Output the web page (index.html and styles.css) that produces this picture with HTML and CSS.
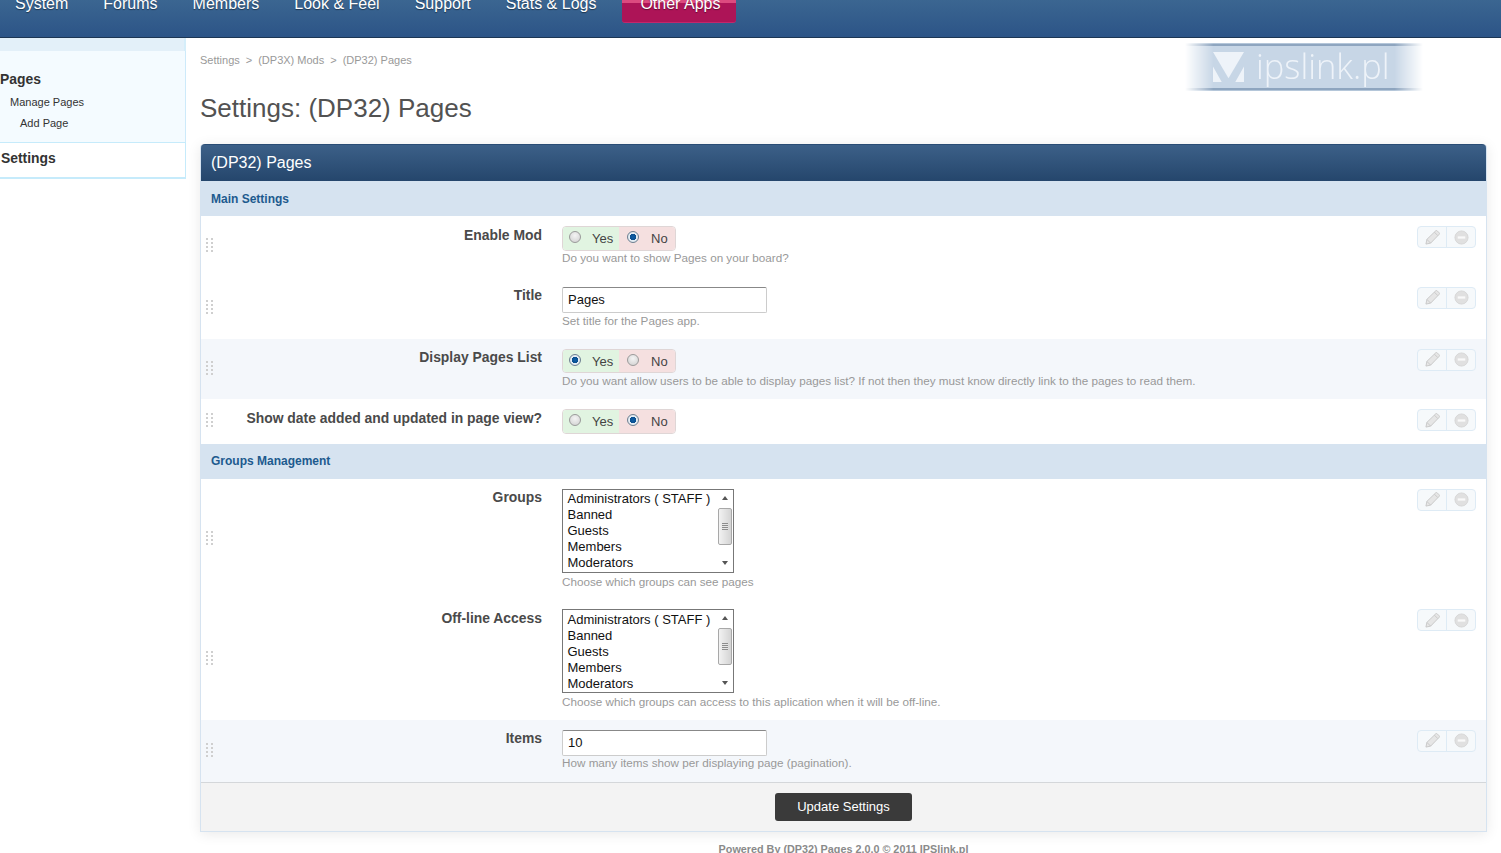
FILE: index.html
```html
<!DOCTYPE html>
<html lang="en">
<head>
<meta charset="utf-8">
<title>Settings: (DP32) Pages</title>
<link rel="stylesheet" href="styles.css">
</head>
<body>
<svg class="defs" width="0" height="0" aria-hidden="true">
  <symbol id="grip" viewBox="0 0 7 14">
    <g fill="#cfcfcf">
      <rect x="0" y="0" width="2" height="2"/><rect x="5" y="0" width="2" height="2"/>
      <rect x="0" y="4" width="2" height="2"/><rect x="5" y="4" width="2" height="2"/>
      <rect x="0" y="8" width="2" height="2"/><rect x="5" y="8" width="2" height="2"/>
      <rect x="0" y="12" width="2" height="2"/><rect x="5" y="12" width="2" height="2"/>
    </g>
  </symbol>
  <symbol id="pencil" viewBox="0 0 16 16">
    <path d="M1 15l1-5L11.500 .8a1 1 0 0 1 1.400 0l2.300 2.300a1 1 0 0 1 0 1.400L6 14z" fill="#e6e6e6" stroke="#c8c8c8"/>
    <path d="M2 10l4 4M10 2.300l3.700 3.700" fill="none" stroke="#c8c8c8"/>
  </symbol>
  <symbol id="minus" viewBox="0 0 16 16">
    <circle cx="8" cy="8" r="7" fill="#e0e0e0" stroke="#d6d6d6"/>
    <rect x="4" y="6.800" width="8" height="2.400" fill="#f9f9f9"/>
  </symbol>
</svg>

<header class="topbar">
  <nav class="nav">
    <a class="nav-item">System</a>
    <a class="nav-item">Forums</a>
    <a class="nav-item">Members</a>
    <a class="nav-item">Look &amp; Feel</a>
    <a class="nav-item">Support</a>
    <a class="nav-item">Stats &amp; Logs</a>
    <a class="nav-item nav-other">Other Apps</a>
  </nav>
</header>

<div class="layout">
  <aside class="sidebar">
    <div class="side-band"></div>
    <div class="side-open">
      <h3 class="side-title side-title-open">Pages</h3>
      <a class="side-link">Manage Pages</a>
      <a class="side-link side-sub">Add Page</a>
    </div>
    <div class="side-closed"><h3 class="side-title">Settings</h3></div>
  </aside>

  <main class="main">
    <div class="top">
      <div>
        <div class="crumbs"><span>Settings</span><span>&gt;</span><span>(DP3X) Mods</span><span>&gt;</span><span>(DP32) Pages</span></div>
        <h1 class="page-title">Settings: (DP32) Pages</h1>
      </div>
      <div class="logo">
        <svg class="logo-mark" viewBox="0 0 32 31" width="31" height="30" aria-hidden="true">
          <path d="M0 0h32L16 27z" fill="#eef3f9"/>
          <path d="M0 15l9 16H0zM32 15l-9 16h9z" fill="#eef3f9"/>
        </svg>
        <span class="logo-text">ipslink.pl</span>
      </div>
    </div>

    <section class="panel">
      <h2 class="panel-head">(DP32) Pages</h2>
      <h3 class="sub-head">Main Settings</h3>

      <div class="row row-enable">
        <svg class="grip"><use href="#grip"/></svg>
        <div class="label">Enable Mod</div>
        <div class="field">
          <div class="toggle"><span class="opt yes"><i class="radio"></i>Yes</span><span class="opt no"><i class="radio on"></i>No</span></div>
          <p class="desc">Do you want to show Pages on your board?</p>
        </div>
        <div class="actions"><span class="act"><svg class="ic"><use href="#pencil"/></svg></span><span class="act"><svg class="ic"><use href="#minus"/></svg></span></div>
      </div>

      <div class="row">
        <svg class="grip"><use href="#grip"/></svg>
        <div class="label">Title</div>
        <div class="field">
          <div class="input">Pages</div>
          <p class="desc">Set title for the Pages app.</p>
        </div>
        <div class="actions"><span class="act"><svg class="ic"><use href="#pencil"/></svg></span><span class="act"><svg class="ic"><use href="#minus"/></svg></span></div>
      </div>

      <div class="row tint">
        <svg class="grip"><use href="#grip"/></svg>
        <div class="label">Display Pages List</div>
        <div class="field">
          <div class="toggle"><span class="opt yes"><i class="radio on"></i>Yes</span><span class="opt no"><i class="radio"></i>No</span></div>
          <p class="desc">Do you want allow users to be able to display pages list? If not then they must know directly link to the pages to read them.</p>
        </div>
        <div class="actions"><span class="act"><svg class="ic"><use href="#pencil"/></svg></span><span class="act"><svg class="ic"><use href="#minus"/></svg></span></div>
      </div>

      <div class="row">
        <svg class="grip"><use href="#grip"/></svg>
        <div class="label">Show date added and updated in page view?</div>
        <div class="field">
          <div class="toggle"><span class="opt yes"><i class="radio"></i>Yes</span><span class="opt no"><i class="radio on"></i>No</span></div>
        </div>
        <div class="actions"><span class="act"><svg class="ic"><use href="#pencil"/></svg></span><span class="act"><svg class="ic"><use href="#minus"/></svg></span></div>
      </div>

      <h3 class="sub-head sub-head-second">Groups Management</h3>

      <div class="row row-groups">
        <svg class="grip"><use href="#grip"/></svg>
        <div class="label">Groups</div>
        <div class="field">
          <div class="list">
            <div class="list-items"><div>Administrators ( STAFF )</div><div>Banned</div><div>Guests</div><div>Members</div><div>Moderators</div></div>
            <div class="scroll"><span class="arrow up"></span><span class="thumb"></span><span class="arrow down"></span></div>
          </div>
          <p class="desc">Choose which groups can see pages</p>
        </div>
        <div class="actions"><span class="act"><svg class="ic"><use href="#pencil"/></svg></span><span class="act"><svg class="ic"><use href="#minus"/></svg></span></div>
      </div>

      <div class="row row-offline">
        <svg class="grip"><use href="#grip"/></svg>
        <div class="label">Off-line Access</div>
        <div class="field">
          <div class="list">
            <div class="list-items"><div>Administrators ( STAFF )</div><div>Banned</div><div>Guests</div><div>Members</div><div>Moderators</div></div>
            <div class="scroll"><span class="arrow up"></span><span class="thumb"></span><span class="arrow down"></span></div>
          </div>
          <p class="desc">Choose which groups can access to this aplication when it will be off-line.</p>
        </div>
        <div class="actions"><span class="act"><svg class="ic"><use href="#pencil"/></svg></span><span class="act"><svg class="ic"><use href="#minus"/></svg></span></div>
      </div>

      <div class="row row-items tint">
        <svg class="grip"><use href="#grip"/></svg>
        <div class="label">Items</div>
        <div class="field">
          <div class="input">10</div>
          <p class="desc">How many items show per displaying page (pagination).</p>
        </div>
        <div class="actions"><span class="act"><svg class="ic"><use href="#pencil"/></svg></span><span class="act"><svg class="ic"><use href="#minus"/></svg></span></div>
      </div>

      <div class="panel-foot"><span class="btn">Update Settings</span></div>
    </section>

    <footer class="powered">Powered By (DP32) Pages 2.0.0 © 2011 IPSlink.pl</footer>
  </main>
</div>
</body>
</html>
```

FILE: styles.css
```css
* { box-sizing: border-box; }
html, body { margin: 0; padding: 0; height: 853px; overflow: hidden; background: #fff; }
body { font-family: "Liberation Sans", Arial, sans-serif; color: #333; font-size: 12px; }
.defs { display: block; height: 0; }

.topbar { height: 38px; overflow: hidden; background: linear-gradient(#3b6691, #2c5487); border-bottom: 1px solid #1c3654; }
.nav { display: flex; margin-top: -16px; padding-left: 15px; gap: 35px; }
.nav-item { height: 39px; line-height: 40px; font-size: 16px; color: #fff; text-shadow: 0 1px 1px rgba(0,0,0,.45); }
.nav-other { margin-left: -9px; padding: 0 16px 0 18px; border-radius: 0 0 3px 3px; background: linear-gradient(to top, #ad1457 19px, #dc4a7f 19px); border-bottom: 1px solid #c2276c; }

.layout { display: flex; }
.sidebar { width: 186px; flex: none; }
.side-band { height: 13px; background: #e3f0f9; border-right: 2px solid #d5eefa; }
.side-open { height: 91px; padding-top: 20px; background: #f4fbff; border-right: 1px solid #cdeafa; }
.side-title { margin: 0; padding-left: 1px; font-size: 13.900px; line-height: 16px; font-weight: bold; color: #333; }
.side-title-open { padding-left: 0; margin-bottom: 7px; }
.side-link { display: block; padding-left: 10px; margin-top: 5px; font-size: 11px; line-height: 16px; color: #333; }
.side-sub { padding-left: 20px; }
.side-closed { height: 37px; padding-top: 7px; background: #fff; border-top: 1px solid #c6ebfb; border-bottom: 2px solid #c6ebfb; border-right: 1px solid #c6ebfb; }

.main { flex: 1; min-width: 0; padding: 0 14px; }
.top { display: flex; justify-content: space-between; height: 86px; }
.crumbs { display: flex; gap: 6px; padding-top: 15px; font-size: 11px; line-height: 14px; color: #999; }
.page-title { margin: 25px 0 0; font-size: 26px; line-height: 32px; font-weight: normal; color: #525252; }
.logo { display: flex; align-items: center; gap: 12px; width: 238px; height: 48px; margin: 5px 64px 0 0; padding-left: 28px; padding-bottom: 3px;
  background: #c7d6e6;
  box-shadow: inset 0 1px 0 #b4c6d9, inset 0 3px 0 #8ea5bf, inset 0 -1px 0 #b4c6d9, inset 0 -3px 0 #8ea5bf;
  -webkit-mask-image: linear-gradient(90deg, transparent, #000 12%, #000 88%, transparent);
  mask-image: linear-gradient(90deg, transparent, #000 12%, #000 88%, transparent); }
.logo-mark { flex: none; margin-top: 2px; }
.logo-text { font-family: "Open Sans", sans-serif; font-weight: 300; font-size: 34.500px; line-height: 44px; color: #eef3f9; }

.panel { border: 1px solid #d6e3f0; border-top: 0; border-radius: 4px 4px 0 0; box-shadow: 0 2px 14px rgba(0,0,0,.09); margin-top: 20px; }
.panel-head { margin: 0; height: 37px; padding: 0 10px; border-radius: 4px 4px 0 0; font-size: 16px; line-height: 35px; font-weight: normal; color: #fff;
  background: linear-gradient(#3c6088, #25466c); border-top: 1px solid #2a4d75; }
.sub-head { margin: 0; height: 35px; padding: 0 10px; font-size: 12px; line-height: 36px; font-weight: bold; color: #1d5a8e; background: #d6e3f0; }
.sub-head-second { line-height: 35px; }

.row { display: grid; grid-template-columns: 341px 1fr auto; column-gap: 20px; padding: 10px 10px 10px 0; position: relative; align-items: start; }
.row-enable .desc { margin: -.5px 0 .5px; }
.row-groups { padding-bottom: 9.500px; }
.row-groups .list { margin-bottom: 1px; }
.row-offline .list { margin-bottom: .5px; }
.row-offline .list-items { padding-top: 2px; }
.row-items { padding-bottom: 10.500px; }
.row-items .desc { margin-top: -.5px; }
.tint { background: #f4f7fb; }
.grip { position: absolute; left: 5px; top: 50%; width: 7px; height: 14px; margin-top: -8px; }
.label { padding-top: .9px; text-align: right; font-size: 13.900px; line-height: 16px; font-weight: bold; color: #4a4a4a; }
.field { min-width: 0; }
.desc { margin: 0; font-size: 11.700px; line-height: 16px; color: #999; }

.toggle { display: inline-flex; height: 24.500px; border-radius: 4px; overflow: hidden; border: 1px solid #dfd6d6; vertical-align: top; }
.opt { display: flex; align-items: center; padding-top: .5px; font-size: 13px; color: #444; }
.yes { width: 56px; padding-left: 6px; background: #e1f4e1; }
.no { width: 56px; padding-left: 8px; background: #f5e0e0; }
.radio { width: 12px; height: 12px; margin-right: 11px; border-radius: 50%; border: 1px solid #9a9a9a; background: radial-gradient(circle at 50% 35%, #f4f4f4, #cfcfcf); margin-top: -3px; }
.no .radio { margin-right: 12px; }
.radio.on { background: radial-gradient(circle, #0d5ea8 0, #0a4f8f 3px, #e6eef5 3.500px, #d6dee6 100%); border-color: #6d7f90; }

.input { width: 205px; height: 26px; padding: 0 5px; font-size: 13px; line-height: 23px; color: #111; background: #fff; border: 1px solid #ccc; border-top-color: #888; border-radius: 2px; }

.list { display: flex; width: 172px; height: 84px; background: #fff; border: 1px solid #777; overflow: hidden; }
.list-items { flex: 1; padding: 1px 0 0 4.500px; font-size: 13px; line-height: 16px; color: #111; white-space: nowrap; }
.scroll { display: flex; flex-direction: column; align-items: center; width: 16px; background: #fff; padding: 0 1px; }
.arrow { width: 0; height: 0; border: 3px solid transparent; flex: none; }
.arrow.up { margin-top: 6px; border-bottom: 4px solid #555; border-top: 0; }
.arrow.down { margin-top: auto; margin-bottom: 7px; border-top: 4px solid #555; border-bottom: 0; }
.thumb { width: 14px; height: 37px; margin-top: 8px; border: 1px solid #a8a8a8; border-radius: 2px; background: repeating-linear-gradient(#8c8c8c 0 1px, #e6e6e6 1px 2px) center / 6px 7px no-repeat, linear-gradient(90deg, #f2f2f2, #d4d4d4); }

.actions { display: flex; width: 59px; height: 22px; border: 1px solid #deebf5; border-radius: 4px; background: #f6f9fb; }
.act { display: flex; align-items: center; justify-content: center; flex: 1; }
.act + .act { border-left: 1px solid #deebf5; flex: none; width: 29px; }
.ic { width: 15px; height: 15px; }

.panel-foot { display: flex; justify-content: center; align-items: center; height: 49px; background: #f3f3f3; border-top: 1px solid #d4d7da; }
.btn { width: 137px; height: 28px; text-align: center; font-size: 13px; line-height: 27px; color: #fff; background: #3a3a3a; border-radius: 3px; }

.powered { margin-top: 10px; text-align: center; font-size: 10.800px; line-height: 14px; font-weight: bold; color: #8a8a8a; }
```
